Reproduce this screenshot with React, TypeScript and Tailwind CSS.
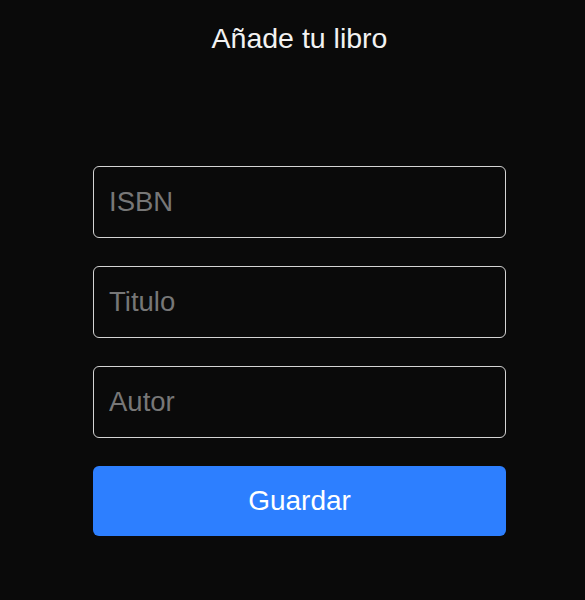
export default function App() {
  return (
    <div className="min-h-[600px] w-full bg-[#0a0a0a] flex flex-col items-center pl-[14px]" style={{ fontFamily: '"Liberation Sans", Arial, sans-serif' }}>
      <h1 className="mt-[20px] text-[28.5px] leading-[36px] text-[#f2f2f2] font-normal">Añade tu libro</h1>
      <form className="mt-[110px] w-[413px] flex flex-col gap-[28px]" onSubmit={(e) => e.preventDefault()}>
        <input placeholder="ISBN" className="h-[72px] w-full rounded-[6px] border border-[#d4d4d4] bg-[#0a0a0a] px-[15px] text-[27.5px] text-white placeholder:text-[#777777] outline-none" />
        <input placeholder="Titulo" className="h-[72px] w-full rounded-[6px] border border-[#d4d4d4] bg-[#0a0a0a] px-[15px] text-[27.5px] text-white placeholder:text-[#777777] outline-none" />
        <input placeholder="Autor" className="h-[72px] w-full rounded-[6px] border border-[#d4d4d4] bg-[#0a0a0a] px-[15px] text-[27.5px] text-white placeholder:text-[#777777] outline-none" />
        <button type="submit" className="h-[70px] w-full rounded-[6px] bg-[#2d7fff] text-[28px] text-white">Guardar</button>
      </form>
    </div>
  );
}
